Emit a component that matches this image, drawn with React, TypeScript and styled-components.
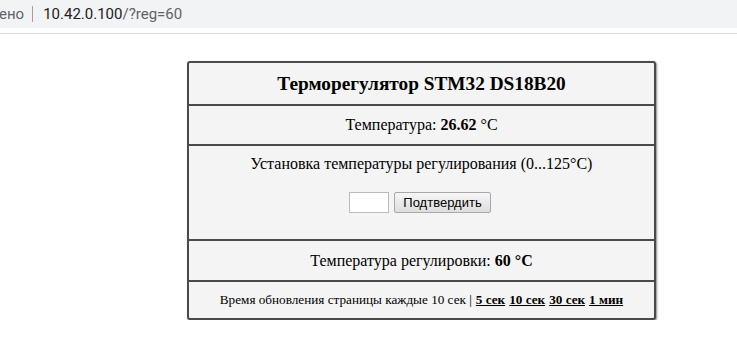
import React from 'react'
import styled, { createGlobalStyle } from 'styled-components'

const GlobalStyle = createGlobalStyle`
  html, body {
    margin: 0;
    padding: 0;
    background: #fff;
  }
`

const AddressBar = styled.div`
  height: 28px;
  background: #f1f3f4;
  display: flex;
  align-items: center;
  font-family: Roboto, "Noto Sans", sans-serif;
  font-size: 15px;
  color: #5f6368;
  white-space: nowrap;
  overflow: hidden;
`

const SecureLabel = styled.span`
  margin-left: -1px;
`

const Divider = styled.span`
  width: 1px;
  height: 16px;
  background: #9aa0a6;
  margin: 0 10px 0 8px;
`

const Host = styled.span`
  color: #202124;
`

const ToolbarLine = styled.div`
  margin-top: 5px;
  height: 1px;
  background: #dadce0;
`

const Page = styled.div`
  padding: 27px 0 0 187px;
  font-family: "Liberation Serif", "Times New Roman", serif;
  color: #000;
`

const Card = styled.div`
  width: 465px;
  border: 2px solid #4a4a4a;
  border-radius: 3px;
  background: #f4f4f4;
  box-shadow: 1px 1px 2px rgba(0, 0, 0, 0.45);
`

const Row = styled.div<{ $height: number; $size?: number }>`
  height: ${(p) => p.$height}px;
  display: flex;
  flex-direction: column;
  align-items: center;
  justify-content: center;
  font-size: ${(p) => p.$size ?? 16}px;
  & + & {
    border-top: 2px solid #4a4a4a;
  }
`

const Title = styled.h3`
  margin: 0;
  font-size: 19.3px;
  font-weight: bold;
`

const SetupRow = styled(Row)`
  justify-content: flex-start;
  padding-top: 9px;
  box-sizing: border-box;
  gap: 19px;
`

const Form = styled.form`
  display: flex;
  align-items: center;
  gap: 5px;
  margin-left: -3px;
`

const ValueInput = styled.input`
  width: 34px;
  height: 17px;
  padding: 1px 2px;
  border: 1px solid #bbb;
  background: #fff;
  font-size: 13px;
`

const SubmitButton = styled.button`
  height: 21px;
  padding: 0 8px;
  font-family: "Liberation Sans", Arial, sans-serif;
  font-size: 13px;
  color: #000;
  border: 1px solid #a8a8a8;
  border-radius: 2px;
  background: linear-gradient(#f6f6f6, #dedede);
`

const RefreshLink = styled.a`
  color: #000;
  font-weight: bold;
  text-decoration: underline;
  margin-left: 4px;
`

const intervals = ['5 сек', '10 сек', '30 сек', '1 мин']

export default function App() {
  return (
    <>
      <GlobalStyle />
      <AddressBar>
        <SecureLabel>ено</SecureLabel>
        <Divider />
        <Host>10.42.0.100</Host>
        <span>/?reg=60</span>
      </AddressBar>
      <ToolbarLine />
      <Page>
        <Card>
          <Row $height={41}>
            <Title>Терморегулятор STM32 DS18B20</Title>
          </Row>
          <Row $height={38}>
            <div>
              Температура: <b>26.62</b> °C
            </div>
          </Row>
          <SetupRow $height={95}>
            <div>Установка температуры регулирования (0...125°C)</div>
            <Form onSubmit={(e) => e.preventDefault()}>
              <ValueInput type="text" />
              <SubmitButton type="submit">Подтвердить</SubmitButton>
            </Form>
          </SetupRow>
          <Row $height={39}>
            <div>
              Температура регулировки: <b>60 °C</b>
            </div>
          </Row>
          <Row $height={36} $size={13.2}>
            <div>
              Время обновления страницы каждые 10 сек |
              {intervals.map((t) => (
                <RefreshLink key={t} href="#">
                  {t}
                </RefreshLink>
              ))}
            </div>
          </Row>
        </Card>
      </Page>
    </>
  )
}
